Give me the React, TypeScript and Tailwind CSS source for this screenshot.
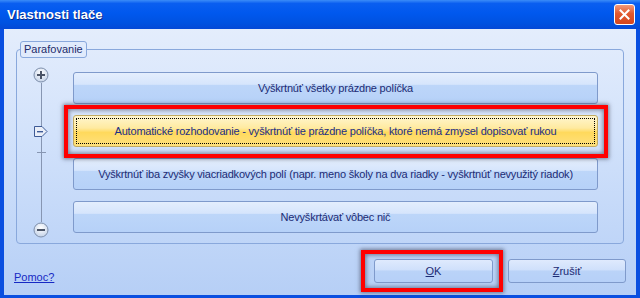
import React from "react";

const OPTIONS = [
  "Vyškrtnúť všetky prázdne políčka",
  "Automatické rozhodovanie - vyškrtnúť tie prázdne políčka, ktoré nemá zmysel dopisovať rukou",
  "Vyškrtnúť iba zvyšky viacriadkových polí (napr. meno školy na dva riadky - vyškrtnúť nevyužitý riadok)",
  "Nevyškrtávať vôbec nič",
];

function RoundKnob({ minus }: { minus?: boolean }) {
  return (
    <svg width="16" height="16" viewBox="0 0 16 16" className="shrink-0">
      <defs>
        <radialGradient id={minus ? "kg2" : "kg1"} cx="50%" cy="35%" r="60%">
          <stop offset="0%" stopColor="#ffffff" />
          <stop offset="100%" stopColor="#c9d6ea" />
        </radialGradient>
      </defs>
      <circle cx="8" cy="8" r="7" fill={`url(#${minus ? "kg2" : "kg1"})`} stroke="#7e8fab" strokeWidth="1" />
      <rect x="4" y="7" width="8" height="2" fill="#4b5467" />
      {!minus && <rect x="7" y="4" width="2" height="8" fill="#4b5467" />}
    </svg>
  );
}

function Line({ h }: { h: string }) {
  return <div className={`w-px bg-[#8796b2] ${h}`} />;
}

export default function App() {
  return (
    <div
      className="w-[640px] h-[298px] flex flex-col bg-[#0a4fe0] overflow-hidden"
      style={{ fontFamily: '"Liberation Sans", Arial, sans-serif' }}
    >
      {/* title bar */}
      <div className="h-[29px] shrink-0 flex items-center justify-between pl-[7px] pr-[5px] bg-[linear-gradient(180deg,#3b8cf8_0%,#0a5ef0_12%,#0058ee_45%,#0052e0_80%,#0449d6_100%)]">
        <span className="text-white font-bold text-[13px] [text-shadow:1px_1px_0_#0a2a8a]">Vlastnosti tlače</span>
        <div className="w-[21px] h-[21px] rounded-[3px] border border-white flex items-center justify-center bg-[linear-gradient(180deg,#f39a7c_0%,#e2592f_45%,#d4461e_100%)]">
          <svg width="11" height="11" viewBox="0 0 11 11">
            <path d="M1.5 1.5 L9.5 9.5 M9.5 1.5 L1.5 9.5" stroke="#fff" strokeWidth="2" strokeLinecap="square" />
          </svg>
        </div>
      </div>

      {/* client */}
      <div className="flex-1 ml-[4px] mr-[4px] mb-[3px] flex flex-col bg-[linear-gradient(180deg,#e4edfc_0%,#d2e2fb_40%,#b6cff6_100%)] text-[11px]">
        <div className="relative mt-[20px] mx-[12px] h-[195px] border border-[#89a8dc] rounded-[4px] flex">
          <div className="absolute left-[3px] -top-[9px] h-[17px] px-[3px] flex items-center border border-[#89a8dc] rounded-[3px] bg-[#e1ebfc] text-[#1d2b6b] text-[11px]">
            Parafovanie
          </div>

          {/* slider */}
          <div className="w-[48px] shrink-0 pt-[17px] flex flex-col items-center">
            <RoundKnob />
            <Line h="h-[43px]" />
            <svg width="14" height="11" viewBox="0 0 14 11" className="shrink-0">
              <path d="M0.5 0.5 H8 L13 5.5 L8 10.5 H0.5 Z" fill="#e9eef8" stroke="#3d5a96" strokeWidth="1" />
              <rect x="3" y="5" width="6" height="1.4" fill="#3d5a96" />
            </svg>
            <Line h="h-[15px]" />
            <div className="w-[9px] h-px bg-[#8796b2]" />
            <Line h="h-[69px]" />
            <RoundKnob minus />
          </div>

          {/* options */}
          <div className="flex-1 flex flex-col gap-[11px] pt-[22px] pl-[8px] pr-[25px] tracking-[-0.2px]">
            {OPTIONS.map((o, i) =>
              i === 1 ? (
                <div key={o} className="relative">
                  <div className="h-[32px] rounded-[3px] border border-[#c2ab62] p-[2px] bg-[linear-gradient(180deg,#fff6cf_0%,#ffeaa0_40%,#ffd95c_55%,#ffe17e_100%)]">
                    <div className="h-full border border-dotted border-black flex items-center justify-center text-[#1c2f86]">
                      {o}
                    </div>
                  </div>
                  <div className="absolute -left-[9px] -right-[10px] -top-[10px] -bottom-[11px] border-[4px] border-[#ff0000] shadow-[0_0_4px_1px_rgba(40,40,60,0.55),inset_0_0_4px_1px_rgba(40,40,60,0.55)]" />
                </div>
              ) : (
                <div
                  key={o}
                  className="h-[32px] rounded-[3px] border border-[#7f9acb] flex items-center justify-center text-[#1c2b74] bg-[linear-gradient(180deg,#e4eefd_0%,#d6e5fc_38%,#bdd6f9_40%,#b6d1f8_100%)]"
                >
                  {o}
                </div>
              )
            )}
          </div>
        </div>

        {/* footer */}
        <div className="mt-auto flex items-end justify-between pl-[10px] pr-[10px] pb-[12px]">
          <span className="text-[#1629c4] underline text-[11px] mb-[-2px]">Pomoc?</span>
          <div className="flex gap-[15px]">
            <div className="relative">
              <div className="w-[119px] h-[24px] rounded-[3px] border border-[#7f9acb] flex items-center justify-center text-[#1c2b74] bg-[linear-gradient(180deg,#dfeafd_0%,#cfe0fb_45%,#bad3f8_50%,#b6d0f8_100%)]">
                <span><span className="underline">O</span>K</span>
              </div>
              <div className="absolute -left-[13px] -right-[10px] -top-[9px] -bottom-[9px] border-[4px] border-[#ff0000] shadow-[0_0_4px_1px_rgba(40,40,60,0.55),inset_0_0_4px_1px_rgba(40,40,60,0.55)]" />
            </div>
            <div className="w-[118px] h-[24px] rounded-[3px] border border-[#7f9acb] flex items-center justify-center text-[#1c2b74] bg-[linear-gradient(180deg,#dfeafd_0%,#cfe0fb_45%,#bad3f8_50%,#b6d0f8_100%)]">
              <span><span className="underline">Z</span>rušiť</span>
            </div>
          </div>
        </div>
      </div>
    </div>
  );
}
